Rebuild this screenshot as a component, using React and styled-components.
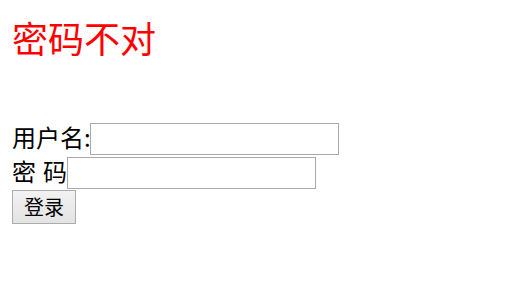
import React from "react";
import styled, { createGlobalStyle } from "styled-components";

const Global = createGlobalStyle`
  html, body { margin: 0; padding: 0; background: #fff; }
  body { font-family: "Noto Sans CJK SC", "Noto Sans", sans-serif; color: #000; }
`;

const Page = styled.div`
  padding: 0 12px;
`;

const Title = styled.div`
  margin-top: 19px;
  font-size: 36px;
  line-height: 36px;
  color: #ff0000;
`;

const Form = styled.form`
  margin-top: 68px;
  display: flex;
  flex-direction: column;
  align-items: flex-start;
`;

const Row = styled.div`
  display: flex;
  align-items: center;
  height: 32px;
  margin-bottom: ${(p) => p.$gap || 0}px;
`;

const Label = styled.span`
  font-size: 24px;
  line-height: 28px;
  margin-bottom: 4px;
  margin-right: ${(p) => p.$mr || 0}px;
  white-space: pre;
  word-spacing: ${(p) => p.$ws || 0}px;
`;

const Input = styled.input`
  box-sizing: border-box;
  width: 249px;
  height: 32px;
  margin: 0;
  padding: 2px 3px;
  border: 1px solid #a9a9a9;
  background: #fff;
  font-size: 20px;
  outline: none;
`;

const Button = styled.button`
  box-sizing: border-box;
  margin-top: 1px;
  width: 64px;
  height: 34px;
  padding: 0;
  border: 1px solid #acacac;
  border-radius: 0;
  background: linear-gradient(#f2f2f2, #e3e3e3);
  font-family: "Noto Sans CJK SC", sans-serif;
  font-size: 20px;
  line-height: 20px;
  color: #000;
`;

export default function App() {
  return (
    <>
      <Global />
      <Page>
        <Title>密码不对</Title>
        <Form onSubmit={(e) => e.preventDefault()}>
          <Row $gap={2}>
            <Label $mr={-1}>用户名:</Label>
            <Input type="text" />
          </Row>
          <Row>
            <Label $ws={1.6}>密 码</Label>
            <Input type="password" />
          </Row>
          <Button type="submit">登录</Button>
        </Form>
      </Page>
    </>
  );
}
